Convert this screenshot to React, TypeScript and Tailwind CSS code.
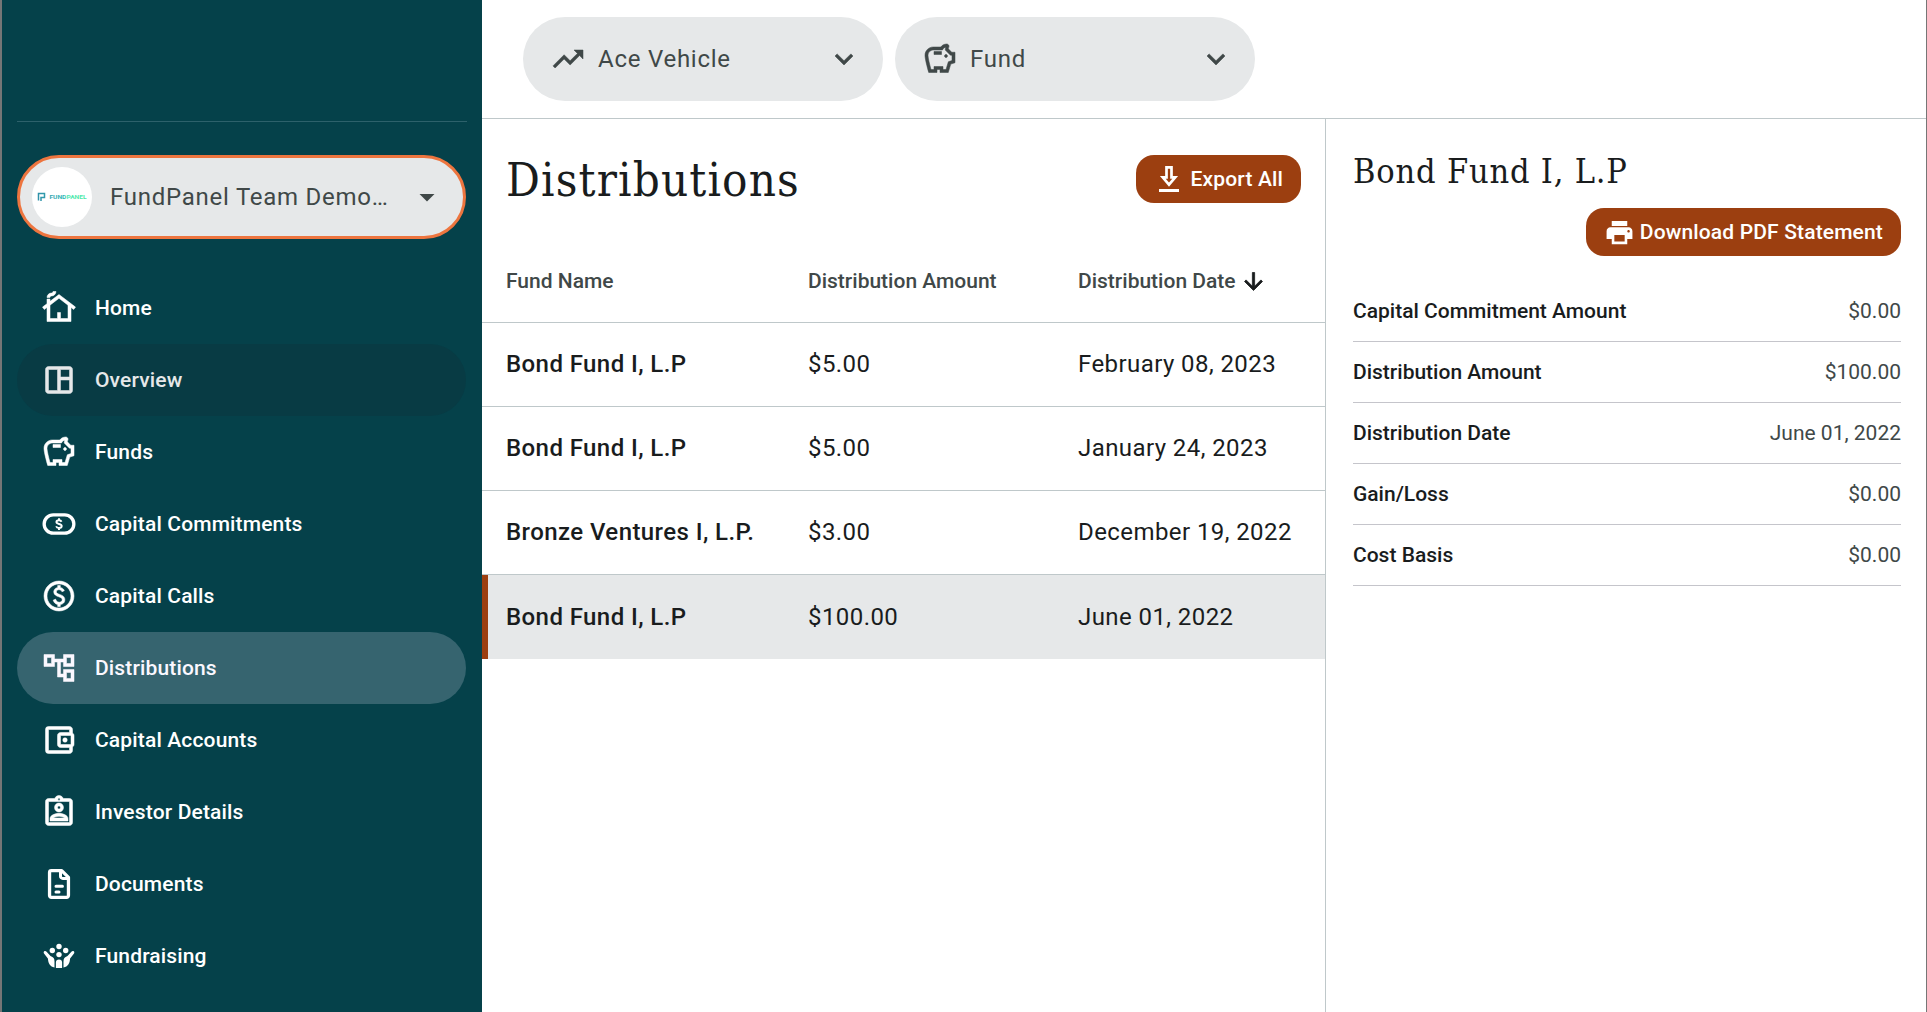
import type { ReactNode } from "react";
import {
  MdOutlineCottage,
  MdOutlineSpaceDashboard,
  MdOutlineSavings,
  MdOutlinePaid,
  MdOutlineAccountTree,
  MdOutlineAccountBalanceWallet,
  MdOutlineAssignmentInd,
  MdPrint,
  MdTrendingUp,
  MdKeyboardArrowDown,
  MdArrowDropDown,
  MdArrowDownward,
} from "react-icons/md";

const CommitmentIcon = () => (
  <svg width="36" height="36" viewBox="0 0 24 24" fill="none" stroke="currentColor">
    <rect x="2.1" y="5.9" width="19.8" height="12.2" rx="6.1" strokeWidth="2.2" />
    <path
      d="M13.7 10.5c-.3-.7-.9-1-1.700-1-1 0-1.700.5-1.700 1.200 0 1.700 3.500.8 3.500 2.700 0 .8-.8 1.300-1.800 1.300-.9 0-1.600-.4-1.900-1.200M12 8.200v1.300M12 14.700v1.300"
      strokeWidth="1.300"
    />
  </svg>
);

const DocumentIcon = () => (
  <svg
    width="36"
    height="36"
    viewBox="0 0 24 24"
    fill="none"
    stroke="currentColor"
    strokeWidth="2.2"
    strokeLinecap="round"
    strokeLinejoin="round"
  >
    <path d="M13.8 3.100H6.900a1.200 1.200 0 0 0-1.200 1.200v15.400a1.200 1.200 0 0 0 1.200 1.200h10.200a1.200 1.200 0 0 0 1.200-1.200V7.600z" />
    <path d="M13 3.500v3.300A1.500 1.500 0 0 0 14.500 8.300H18M10 13.500h4.300M10 17.400h2" strokeWidth="2" />
  </svg>
);

const FundraisingIcon = () => (
  <svg width="36" height="36" viewBox="0 0 36 36" fill="currentColor">
    <circle cx="18" cy="8.500" r="2.700" />
    <circle cx="11.300" cy="12.500" r="2.700" />
    <circle cx="24.700" cy="12.500" r="2.700" />
    <circle cx="18" cy="16.600" r="2.700" />
    <path d="M14.900 30v-5.500a3.100 3.100 0 0 1 6.200 0V30z" />
    <path d="M3 13.500c.8-.8 1.900-.6 2.600.2l3.900 4.300c3 1 4 2.700 4 5.500v6C9 28.500 7.300 25.500 6.900 20.500L3.200 15.800c-.6-.8-.7-1.700-.2-2.300z" />
    <path d="M33 13.500c-.8-.8-1.900-.6-2.600.2l-3.900 4.300c-3 1-4 2.700-4 5.500v6c4.500-1 6.200-4 6.600-9l3.700-4.700c.6-.8.700-1.700.2-2.300z" />
  </svg>
);

const ExportIcon = () => (
  <svg width="20" height="26" viewBox="0 0 20 26" fill="none" stroke="currentColor">
    <path d="M7.500 1.400h5v10h3.700L10 18.700l-6.200-7.300h3.700z" strokeWidth="2.700" />
    <path d="M0 24.500h20" strokeWidth="3" />
  </svg>
);

interface NavItem {
  label: string;
  icon: ReactNode;
  state?: "hover" | "active";
}

// Thickens the icon, but leaves its invisible bounding box alone
const iconStroke = "stroke-[0.35] [&>path[fill=none]]:stroke-none";

const navItems: NavItem[] = [
  { label: "Home", icon: <MdOutlineCottage size={36} className={iconStroke} /> },
  { label: "Overview", icon: <MdOutlineSpaceDashboard size={36} className={iconStroke} />, state: "hover" },
  { label: "Funds", icon: <MdOutlineSavings size={36} className={iconStroke} /> },
  { label: "Capital Commitments", icon: <CommitmentIcon /> },
  { label: "Capital Calls", icon: <MdOutlinePaid size={36} className={iconStroke} /> },
  { label: "Distributions", icon: <MdOutlineAccountTree size={36} className={iconStroke} />, state: "active" },
  { label: "Capital Accounts", icon: <MdOutlineAccountBalanceWallet size={36} className={iconStroke} /> },
  { label: "Investor Details", icon: <MdOutlineAssignmentInd size={36} className={iconStroke} /> },
  { label: "Documents", icon: <DocumentIcon /> },
  { label: "Fundraising", icon: <FundraisingIcon /> },
];

const distributions = [
  { fund: "Bond Fund I, L.P", amount: "$5.00", date: "February 08, 2023" },
  { fund: "Bond Fund I, L.P", amount: "$5.00", date: "January 24, 2023" },
  { fund: "Bronze Ventures I, L.P.", amount: "$3.00", date: "December 19, 2022" },
  { fund: "Bond Fund I, L.P", amount: "$100.00", date: "June 01, 2022", selected: true },
];

const details = [
  { label: "Capital Commitment Amount", value: "$0.00" },
  { label: "Distribution Amount", value: "$100.00" },
  { label: "Distribution Date", value: "June 01, 2022" },
  { label: "Gain/Loss", value: "$0.00" },
  { label: "Cost Basis", value: "$0.00" },
];

const navStyles = {
  default: "text-white",
  hover: "bg-[#083b44] text-[#e6e8e9]",
  active: "bg-[#36646f] text-[#fbf8ff]",
};

const Sidebar = () => (
  <aside className="w-[482px] shrink-0 border-l-2 border-[#767676] bg-[#05414a] pl-[15px]">
    <div className="h-[122px] w-[450px] border-b border-[#2d616b]" />
    {/* Organisation picker */}
    <button className="mt-[33px] flex h-[84px] w-[449px] items-center rounded-full border-3 border-[#ed753f] bg-[#e6e8e9] pl-3 text-[#404848]">
      <span className="flex size-[60px] shrink-0 items-center justify-center rounded-full bg-white">
        <svg width="50" height="10" viewBox="0 0 50 10" fill="none">
          <defs>
            <linearGradient id="brand" x1="0" x2="50" y1="0" y2="0" gradientUnits="userSpaceOnUse">
              <stop stopColor="#2f8fa8" />
              <stop offset="0.55" stopColor="#35b9b8" />
              <stop offset="0.6" stopColor="#4fe8b4" />
              <stop offset="1" stopColor="#4fe8a4" />
            </linearGradient>
          </defs>
          <path d="M1.500 8.500V1.500h6v4H4v3.500" stroke="url(#brand)" strokeWidth="1.500" />
          <text
            x="12.5"
            y="7.2"
            fill="url(#brand)"
            fontFamily="Roboto, sans-serif"
            fontSize="6"
            fontWeight="700"
            textLength="37"
            lengthAdjust="spacingAndGlyphs"
          >
            FUNDPANEL
          </text>
        </svg>
      </span>
      <span className="ml-[18px] w-[299px] shrink-0 text-left text-2xl tracking-[0.75px]">FundPanel Team Demo…</span>
      <MdArrowDropDown size={36} className="shrink-0" />
    </button>
    <nav className="mt-[33px] w-[449px]">
      {navItems.map((item) => (
        <a
          key={item.label}
          className={`flex h-[72px] items-center gap-[18px] rounded-full pl-6 text-[21px] font-medium tracking-[0.15px] ${navStyles[item.state ?? "default"]}`}
        >
          {item.icon}
          <span className="pt-px">{item.label}</span>
        </a>
      ))}
    </nav>
  </aside>
);

const FilterSelect = ({ icon, label }: { icon: ReactNode; label: string }) => (
  <button className="flex h-[84px] w-[360px] items-center rounded-full bg-[#e6e8e9] pr-[21px] pl-[27px] text-2xl tracking-[0.75px] text-[#404848]">
    {icon}
    <span className="ml-3 flex-1 text-left">{label}</span>
    <MdKeyboardArrowDown size={36} className={iconStroke} />
  </button>
);

const App = () => {
  return (
    <div className="flex h-[1012px] w-[1927px] overflow-hidden bg-white font-['Roboto',sans-serif] text-[#191c1d]">
      <Sidebar />
      <main className="flex flex-1 flex-col border-r border-[#767676]">
        <header className="flex h-[119px] shrink-0 gap-3 border-b border-[#bfc8ca] pt-[17px] pl-[41px]">
          <FilterSelect icon={<MdTrendingUp size={36} className={iconStroke} />} label="Ace Vehicle" />
          <FilterSelect icon={<MdOutlineSavings size={36} className={iconStroke} />} label="Fund" />
        </header>
        <div className="flex flex-1">
          <section className="w-[844px] shrink-0 border-r border-[#bfc8ca]">
            <div className="flex h-[120px] items-center justify-between pr-6 pl-6">
              <h1 className="pt-0.5 font-['Roboto_Slab','DejaVu_Serif_Condensed','DejaVu_Serif',serif] text-[47px] tracking-[1.15px]">
                Distributions
              </h1>
              <button className="flex h-12 items-center gap-3 rounded-[18px] bg-[#9c3f10] pr-[18px] pl-[23px] text-[21px] font-medium tracking-[0.15px] text-white">
                <ExportIcon />
                <span className="pt-px">Export All</span>
              </button>
            </div>
            <table className="w-full table-fixed border-separate border-spacing-0 text-left">
              <colgroup>
                <col className="w-[326px]" />
                <col className="w-[270px]" />
                <col />
              </colgroup>
              <thead>
                <tr className="h-[84px] text-[21px] text-[#404848] *:border-b *:border-[#bfc8ca] *:pt-0.5">
                  <th className="pl-6 font-medium">Fund Name</th>
                  <th className="font-medium">Distribution Amount</th>
                  <th className="font-medium">
                    <span className="flex items-center gap-1">
                      Distribution Date
                      <MdArrowDownward
                        size={27}
                        className="stroke-[0.7] text-[#191c1d] [&>path[fill=none]]:stroke-none"
                      />
                    </span>
                  </th>
                </tr>
              </thead>
              <tbody>
                {distributions.map((row, i) => (
                  <tr
                    key={i}
                    className={`h-[84px] text-2xl tracking-[0.42px] ${row.selected ? "bg-[#e6e8e9]" : "*:border-b *:border-[#bfc8ca] *:pb-0.5"}`}
                  >
                    <td className={row.selected ? "border-l-6 border-[#9c3f10] pl-[18px] font-medium" : "pl-6 font-medium"}>
                      {row.fund}
                    </td>
                    <td>{row.amount}</td>
                    <td>{row.date}</td>
                  </tr>
                ))}
              </tbody>
            </table>
          </section>
          {/* Detail panel */}
          <section className="flex-1 pt-[30px] pr-[25px] pl-[27px]">
            <h2 className="font-['Roboto_Slab','DejaVu_Serif_Condensed','DejaVu_Serif',serif] text-[34px] leading-[44px] tracking-[0.8px]">
              Bond Fund I, L.P
            </h2>
            <div className="mt-[15px] flex justify-end">
              <button className="flex h-12 items-center gap-[5px] rounded-[18px] bg-[#9c3f10] px-[18px] text-[21px] font-medium tracking-[0.15px] text-white">
                <MdPrint size={31} />
                <span className="pt-px">Download PDF Statement</span>
              </button>
            </div>
            <dl className="mt-[25px]">
              {details.map((item) => (
                <div
                  key={item.label}
                  className="flex h-[61px] items-center justify-between border-b border-[#c5c5cb] pt-0.5 text-[21px]"
                >
                  <dt className="font-medium">{item.label}</dt>
                  <dd className="text-[#404848]">{item.value}</dd>
                </div>
              ))}
            </dl>
          </section>
        </div>
      </main>
    </div>
  );
};

export default App;
